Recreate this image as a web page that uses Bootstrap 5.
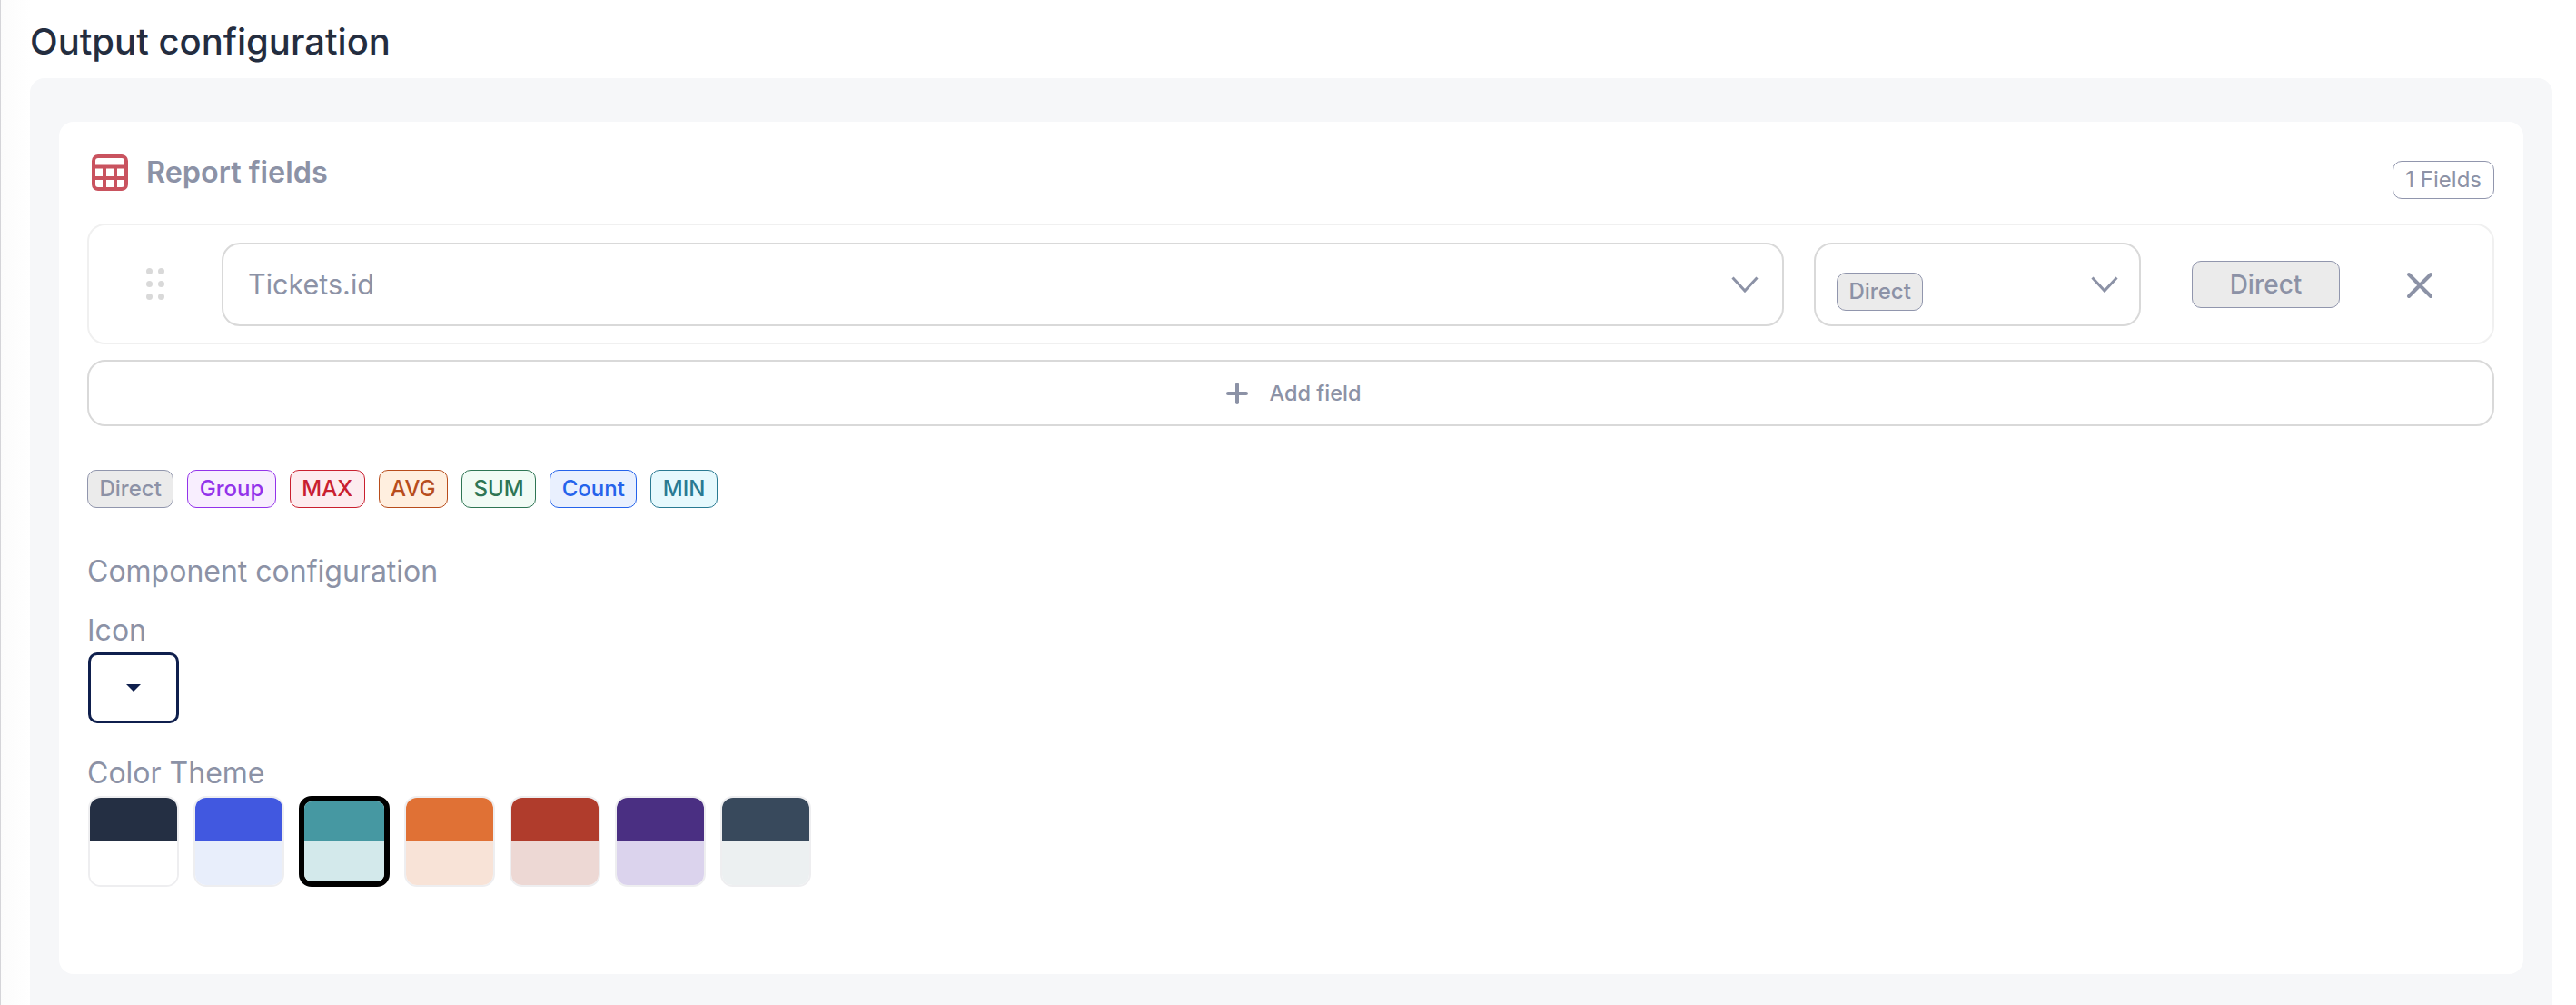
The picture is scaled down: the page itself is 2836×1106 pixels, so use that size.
<!DOCTYPE html>
<html lang="en">
<head>
<meta charset="utf-8">
<title>Output configuration</title>
<link href="https://cdn.jsdelivr.net/npm/bootstrap@5.3.0/dist/css/bootstrap.min.css" rel="stylesheet">
<style>
html,body{height:100%;}
body{font-family:Inter,"Liberation Sans",sans-serif;background:linear-gradient(90deg,#fbfbfb,#fff 33px);border-left:1px solid #d4d4d8;padding:20px 26px 0 32px;overflow:hidden;color:#8c92a6;}
.page-title{font-size:40px;line-height:52px;font-weight:500;color:#242d3f;margin:0 0 14px;}
.out-panel{background:#f6f7f9;border-radius:16px 16px 0 0;padding:48px 32px 34px;}
.out-card{background:#fff;border-radius:16px;padding:36px 32px 96px 31px;}
.rep-title{font-size:32.4px;line-height:40px;font-weight:600;color:#8c92a6;}
.rep-icon{margin-left:5px;margin-right:4px;}
.count-chip{font-size:24px;line-height:36px;height:42px;padding:2px 13px;border:1.5px solid #9196ad;border-radius:10px;color:#8c92a6;margin-top:7px;}
.rep-head{margin-bottom:27px;}
.field-row{height:133px;border:2px solid #f0f0f0;border-radius:20px;padding-left:63px;padding-right:65px;}
.grip{width:20px;margin-right:63px;}
.grip-dot{width:7px;height:7px;border-radius:50%;background:#d9d9d9;}
.grip-grid{display:grid;grid-template-columns:7px 7px;column-gap:6px;row-gap:7px;}
.sel-box{height:92px;border:2px solid #d9d9d9;border-radius:20px;background:#fff;}
.sel-main{padding:0 26px 0 27px;font-size:30.5px;color:#8c92a6;}
.sel-type{width:360px;flex:0 0 360px;margin-left:33px;padding:0 23px 0 23px;}
.tag-chip{display:inline-flex;align-items:center;height:42px;padding:0 12.5px;font-size:24px;font-weight:500;border:1.5px solid;border-radius:10px;}
.t-direct{background:#ebebeb;border-color:#9196ad;color:#8c92a6;}
.t-group{background:#f8eefe;border-color:#9333ea;color:#9333ea;}
.t-max{background:#fdecef;border-color:#c9202f;color:#c9202f;}
.t-avg{background:#ffefdf;border-color:#b84d1c;color:#b84d1c;}
.t-sum{background:#f1fbf5;border-color:#2f7554;color:#2f7554;}
.t-count{background:#e9f0fe;border-color:#2563eb;color:#2563eb;}
.t-min{background:#e6f9fd;border-color:#2a7a92;color:#2a7a92;}
.sel-chip{margin-top:16px;}
.agg-btn{width:163px;height:52px;margin-left:56px;background:#ebebeb;border:1.5px solid #9196ad;border-radius:10px;color:#8c92a6;font-size:28px;font-weight:500;padding:0;line-height:1;}
.agg-btn:hover{background:#ebebeb;color:#8c92a6;border-color:#9196ad;}
.del-btn{margin-left:73px;margin-top:3px;background:none;border:0;padding:0;line-height:0;}
.add-btn{width:100%;height:73px;margin-top:17px;padding:0 0 0 6px;background:#fff;border:2px solid #d9d9d9;border-radius:20px;color:#8c92a6;font-size:23.5px;font-weight:500;gap:24px;}
.add-btn:hover{background:#fff;color:#8c92a6;border-color:#d9d9d9;}
.legend-row{margin-top:48px;gap:15px;}
.sec-label{font-size:32px;line-height:40px;color:#8c92a6;font-weight:400;}
.sec-comp{margin-top:50px;}
.sec-icon{margin-top:25px;margin-bottom:4px;}
.sec-color{margin-top:35px;margin-bottom:5px;}
.icon-pick{display:flex;align-items:center;justify-content:center;width:100px;height:78px;margin-left:1px;border:3px solid #0f1f4d;border-radius:10px;background:#fff;color:#0f1f4d;padding:0;}
.icon-pick:hover,.icon-pick:active{background:#fff;color:#0f1f4d;border-color:#0f1f4d;}
.icon-pick.dropdown-toggle::after{margin:0;border-top:8px solid;border-right:8px solid transparent;border-left:8px solid transparent;border-bottom:0;}
.swatches{margin-left:1px;gap:16px;}
.swatch{display:flex;flex-direction:column;width:100px;height:100px;overflow:hidden;border:2.5px solid #eeeef0;border-radius:14px;padding:0;background:none;}
.swatch.is-on{border:6px solid #000;}
.sw-top{flex:0 0 auto;height:48px;}
.swatch.is-on .sw-top{height:44px;}
.sw-bot{flex:1 1 auto;}
.a1{background:#242f43}.b1{background:#fff}
.a2{background:#4158e0}.b2{background:#e8eefb}
.a3{background:#4698a2}.b3{background:#d3e9eb}
.a4{background:#e07135}.b4{background:#f8e3d7}
.a5{background:#b03c2c}.b5{background:#edd8d4}
.a6{background:#4a2f82}.b6{background:#dbd3ed}
.a7{background:#38495c}.b7{background:#ecf0f1}
</style>
</head>
<body>
<h1 class="page-title">Output configuration</h1>
<div class="out-panel">
  <div class="out-card">
    <div class="rep-head d-flex justify-content-between align-items-start">
      <div class="d-flex align-items-center gap-3">
        <svg class="rep-icon" width="40" height="40" viewBox="0 0 40 40" fill="none" stroke="#c9535f" stroke-width="4"><rect x="2" y="2" width="36" height="36" rx="5"/><path d="M2 13.5h36M2 26h36M14 13v25M26 13v25"/></svg>
        <span class="rep-title">Report fields</span>
      </div>
      <span class="count-chip">1 Fields</span>
    </div>

    <div class="field-row d-flex align-items-center">
      <div class="grip"><div class="grip-grid"><i class="grip-dot"></i><i class="grip-dot"></i><i class="grip-dot"></i><i class="grip-dot"></i><i class="grip-dot"></i><i class="grip-dot"></i></div></div>
      <div class="sel-box sel-main flex-grow-1 d-flex align-items-center justify-content-between">
        <span>Tickets.id</span>
        <svg width="30" height="18" viewBox="0 0 30 18" fill="none" stroke="#8c92a6" stroke-width="3"><path d="M1.5 1.5 15 16 28.5 1.5"/></svg>
      </div>
      <div class="sel-box sel-type d-flex align-items-center justify-content-between">
        <span class="tag-chip t-direct sel-chip">Direct</span>
        <svg width="30" height="18" viewBox="0 0 30 18" fill="none" stroke="#8c92a6" stroke-width="3"><path d="M1.5 1.5 15 16 28.5 1.5"/></svg>
      </div>
      <button type="button" class="btn agg-btn">Direct</button>
      <button type="button" class="del-btn" aria-label="Remove"><svg width="30" height="30" viewBox="0 0 30 30" fill="none" stroke="#8c92a6" stroke-width="4" stroke-linecap="round"><path d="M3 3 27 27M27 3 3 27"/></svg></button>
    </div>

    <button type="button" class="btn add-btn d-flex align-items-center justify-content-center">
      <svg width="24" height="24" viewBox="0 0 24 24" fill="none" stroke="#8c92a6" stroke-width="4" stroke-linecap="round"><path d="M12 2v20M2 12h20"/></svg>
      <span>Add field</span>
    </button>

    <div class="legend-row d-flex">
      <span class="tag-chip t-direct">Direct</span>
      <span class="tag-chip t-group">Group</span>
      <span class="tag-chip t-max">MAX</span>
      <span class="tag-chip t-avg">AVG</span>
      <span class="tag-chip t-sum">SUM</span>
      <span class="tag-chip t-count">Count</span>
      <span class="tag-chip t-min">MIN</span>
    </div>

    <div class="sec-label sec-comp">Component configuration</div>
    <div class="sec-label sec-icon">Icon</div>
    <button type="button" class="btn icon-pick dropdown-toggle" aria-label="Icon"></button>
    <div class="sec-label sec-color">Color Theme</div>
    <div class="swatches d-flex">
      <div class="swatch"><div class="sw-top a1"></div><div class="sw-bot b1"></div></div>
      <div class="swatch"><div class="sw-top a2"></div><div class="sw-bot b2"></div></div>
      <div class="swatch is-on"><div class="sw-top a3"></div><div class="sw-bot b3"></div></div>
      <div class="swatch"><div class="sw-top a4"></div><div class="sw-bot b4"></div></div>
      <div class="swatch"><div class="sw-top a5"></div><div class="sw-bot b5"></div></div>
      <div class="swatch"><div class="sw-top a6"></div><div class="sw-bot b6"></div></div>
      <div class="swatch"><div class="sw-top a7"></div><div class="sw-bot b7"></div></div>
    </div>
  </div>
</div>
<script src="https://cdn.jsdelivr.net/npm/bootstrap@5.3.0/dist/js/bootstrap.bundle.min.js"></script>
</body>
</html>
